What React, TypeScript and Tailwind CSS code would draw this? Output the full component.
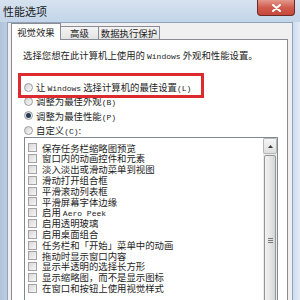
import type { ReactNode } from "react";

const mono = "font-['Liberation_Mono',monospace] text-[8px]";

function L({ children }: { children: ReactNode }) {
  return <span className={mono}>{children}</span>;
}

const items: ReactNode[] = [
  "保存任务栏缩略图预览",
  "窗口内的动画控件和元素",
  "淡入淡出或滑动菜单到视图",
  "滑动打开组合框",
  "平滑滚动列表框",
  "平滑屏幕字体边缘",
  <>
    启用 <L>Aero Peek</L>
  </>,
  "启用透明玻璃",
  "启用桌面组合",
  "任务栏和「开始」菜单中的动画",
  "拖动时显示窗口内容",
  "显示半透明的选择长方形",
  "显示缩略图，而不是显示图标",
  "在窗口和按钮上使用视觉样式",
];

function Radio({ checked }: { checked?: boolean }) {
  return (
    <span className="flex h-[9px] w-[9px] shrink-0 items-center justify-center rounded-full border border-[#9a9b9c] bg-gradient-to-br from-[#d2d2d2] to-[#fafafa]">
      {checked && <span className="h-[5px] w-[5px] rounded-full bg-[#233b58]" />}
    </span>
  );
}

function Check() {
  return (
    <span className="h-[9px] w-[9px] shrink-0 border border-[#a3a3a3] bg-gradient-to-br from-[#d9d9d9] to-[#f6f6f6]" />
  );
}

function RadioRow({ checked, children, h }: { checked?: boolean; children: ReactNode; h: string }) {
  return (
    <div className={`flex items-center gap-[3px] pl-[12px] leading-[12px] ${h}`}>
      <Radio checked={checked} />
      <span className="block h-[12px]">{children}</span>
    </div>
  );
}

function Tab({ active, children, w }: { active?: boolean; children: ReactNode; w: string }) {
  if (active) {
    return (
      <div className={`relative z-10 -mb-px flex h-[17px] items-start justify-center border-x border-t border-[#898c95] bg-white pt-[2px] leading-[12px] ${w}`}>
        {children}
      </div>
    );
  }
  return (
    <div className={`flex h-[13px] items-center justify-center border-r border-t border-[#898c95] bg-gradient-to-b from-[#f4f4f4] to-[#e3e3e3] leading-[12px] ${w}`}>
      {children}
    </div>
  );
}

export default function App() {
  return (
    <div className="relative h-[300px] w-[300px] overflow-hidden bg-[#c5d6e9] font-['Noto_Sans_CJK_SC',sans-serif] text-[9.4px] text-[#1c1c1c]">
      {/* title bar */}
      <div className="flex h-[22px] items-start justify-between bg-gradient-to-b from-[#d6e2ef] to-[#c3d5e9]">
        <span className="pl-[3px] pt-[4px] text-[11px] leading-[14px] text-[#1a1a1a]">性能选项</span>
        <div className="mr-[5px] flex h-[16px] w-[38px] items-center justify-center rounded-b-[4px] border border-t-0 border-[#6b2a25] bg-gradient-to-b from-[#e3988c] via-[#cf5c4e] to-[#c8473a]">
          <svg width="9" height="8" viewBox="0 0 9 8">
            <path d="M1 1 L8 7 M8 1 L1 7" stroke="#fff" strokeWidth="2" strokeLinecap="round" />
          </svg>
        </div>
      </div>

      <div className="flex h-[278px]">
        <div className="w-[7px] bg-gradient-to-r from-[#b0c3da] to-[#bccde1]" />
        {/* client area */}
        <div className="flex w-[286px] flex-col border-x border-t border-[#90a3ba] bg-[#f0f0f0]">
          {/* tabs */}
          <div className="flex h-[21px] items-end pl-[3px]">
            <Tab active w="w-[50px]">视觉效果</Tab>
            <Tab w="w-[38px]">高级</Tab>
            <Tab w="w-[61px]">数据执行保护</Tab>
          </div>
          {/* tab panel */}
          <div className="ml-[3px] mr-[4px] flex-1 border border-b-0 border-[#898c95] bg-white">
            <div className="pl-[11px] pt-[9px] leading-[12px]">
              选择您想在此计算机上使用的 <L>Windows</L> 外观和性能设置。
            </div>
            <div className="mt-[17px]">
              <RadioRow h="h-[14px]">
                让 <L>Windows</L> 选择计算机的最佳设置<L>(L)</L>
              </RadioRow>
              <RadioRow h="h-[14px]">
                调整为最佳外观<L>(B)</L>
              </RadioRow>
              <RadioRow checked h="h-[15px]">
                调整为最佳性能<L>(P)</L>
              </RadioRow>
              <RadioRow h="h-[14px]">
                自定义<L>(C)</L>:
              </RadioRow>
            </div>
            {/* list box */}
            <div className="ml-[12px] flex h-[200px] w-[254px] border border-b-0 border-[#828790]">
              <div className="flex-1 pt-[4.6px]">
                {items.map((it, i) => (
                  <div key={i} className="flex h-[10.8px] items-center gap-[5px] pl-[3px]">
                    <Check />
                    <span className="block h-[10.8px] whitespace-nowrap leading-[10.8px]">{it}</span>
                  </div>
                ))}
              </div>
              <div className="flex w-[14px] flex-col bg-[#ececec]">
                <div className="flex h-[16px] items-center justify-center rounded-[2px] border border-[#b7b7b7] bg-gradient-to-b from-[#f6f6f6] to-[#dedede]">
                  <svg width="5" height="3" viewBox="0 0 5 3">
                    <path d="M0 3 L2.5 0 L5 3 Z" fill="#3b3b3b" />
                  </svg>
                </div>
                <div className="mx-[1px] mt-[1px] flex h-[170px] items-center justify-center rounded-[2px] border border-[#959595] bg-gradient-to-r from-[#f2f2f2] via-[#e6e6e6] to-[#d4d4d4]">
                  <div className="flex flex-col gap-[1px]">
                    <span className="h-px w-[5px] bg-[#7a7a7a]" />
                    <span className="h-px w-[5px] bg-[#7a7a7a]" />
                    <span className="h-px w-[5px] bg-[#7a7a7a]" />
                  </div>
                </div>
              </div>
            </div>
          </div>
        </div>
        <div className="flex-1 bg-gradient-to-r from-[#cddced] to-[#e3ecf5]" />
      </div>

      {/* red annotation box */}
      <div className="absolute left-[18px] top-[73px] h-[25px] w-[186px] border-[3px] border-[#dc2a2f]" />
    </div>
  );
}
